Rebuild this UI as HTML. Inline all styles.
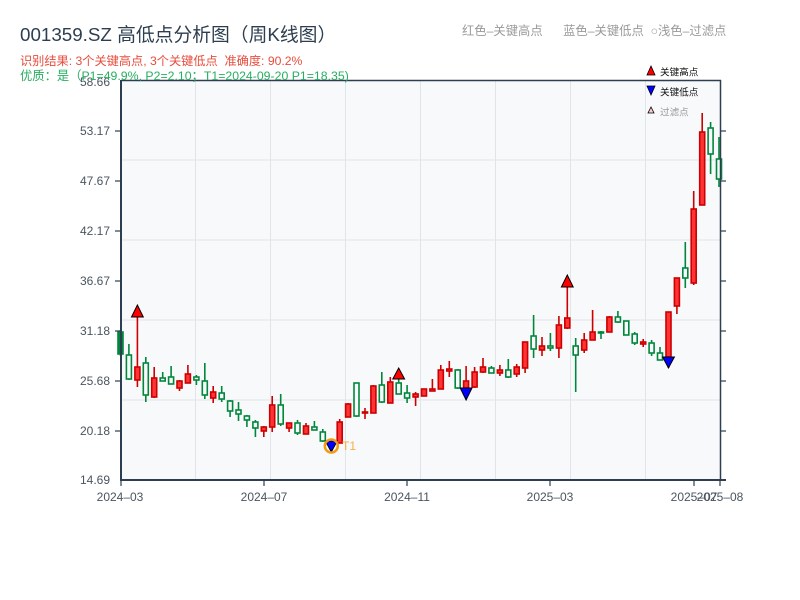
<!DOCTYPE html>
<html><head><meta charset="utf-8"><style>
body{margin:0;background:#fff;width:800px;height:600px;overflow:hidden;font-family:"Liberation Sans","Noto Sans CJK SC",sans-serif}
.t{position:absolute;white-space:nowrap}
</style></head><body>
<div class="t" style="left:20px;top:20px;font-size:18.8px;color:#2c3e50">001359.SZ 高低点分析图（周K线图）</div>
<div class="t" style="left:20px;top:51px;font-size:12.2px;color:#e74c3c">识别结果: 3个关键高点, 3个关键低点&nbsp;&nbsp;准确度: 90.2%</div>
<div class="t" style="left:462px;top:21px;font-size:12.3px;color:#999">红色–关键高点&nbsp;&nbsp;&nbsp;&nbsp;&nbsp;&nbsp;蓝色–关键低点&nbsp;&nbsp;○浅色–过滤点</div>
<svg width="800" height="600" style="position:absolute;left:0;top:0" font-family="Liberation Sans, Noto Sans CJK SC, sans-serif">
<rect x="121" y="81" width="599" height="399" fill="#f7f9fb"/>
<g stroke="#e1e4e8" stroke-width="1">
<line x1="195.5" y1="81" x2="195.5" y2="480"/><line x1="270.5" y1="81" x2="270.5" y2="480"/><line x1="345.5" y1="81" x2="345.5" y2="480"/><line x1="420.5" y1="81" x2="420.5" y2="480"/><line x1="495.5" y1="81" x2="495.5" y2="480"/><line x1="570.5" y1="81" x2="570.5" y2="480"/><line x1="645.5" y1="81" x2="645.5" y2="480"/>
<line x1="121" y1="160" x2="720" y2="160"/><line x1="121" y1="240" x2="720" y2="240"/><line x1="121" y1="320" x2="720" y2="320"/><line x1="121" y1="400" x2="720" y2="400"/>
</g>
<g id="c" stroke-width="1.6">
<g stroke="#00873c" fill="#f7f9fb">
<line x1="120.5" y1="330" x2="120.5" y2="356"/><rect x="118" y="332" width="5" height="22" fill="#00873c"/>
<line x1="128.9" y1="344" x2="128.9" y2="380"/><rect x="126.4" y="355" width="5" height="24"/>
<line x1="145.8" y1="357" x2="145.8" y2="402"/><rect x="143.3" y="363" width="5" height="32"/>
<line x1="162.7" y1="372" x2="162.7" y2="381"/><rect x="160.2" y="378" width="5" height="3"/>
<line x1="171.1" y1="366" x2="171.1" y2="384"/><rect x="168.6" y="377" width="5" height="7"/>
<line x1="196.4" y1="375" x2="196.4" y2="385"/><rect x="193.9" y="377" width="5" height="3"/>
<line x1="204.8" y1="363" x2="204.8" y2="399"/><rect x="202.3" y="381" width="5" height="14"/>
<line x1="221.7" y1="386" x2="221.7" y2="402"/><rect x="219.2" y="393" width="5" height="6"/>
<line x1="230.1" y1="400" x2="230.1" y2="417"/><rect x="227.6" y="401" width="5" height="10"/>
<line x1="238.5" y1="402" x2="238.5" y2="421"/><rect x="236" y="410" width="5" height="4"/>
<line x1="246.9" y1="415" x2="246.9" y2="427"/><rect x="244.4" y="416" width="5" height="4"/>
<line x1="255.4" y1="420" x2="255.4" y2="437"/><rect x="252.9" y="422" width="5" height="6"/>
<line x1="280.7" y1="394" x2="280.7" y2="426"/><rect x="278.2" y="405" width="5" height="19"/>
<line x1="297.5" y1="420" x2="297.5" y2="435"/><rect x="295" y="423" width="5" height="10"/>
<line x1="314.4" y1="421" x2="314.4" y2="430"/><rect x="311.9" y="427" width="5" height="3"/>
<line x1="322.8" y1="429" x2="322.8" y2="442"/><rect x="320.3" y="432" width="5" height="9"/>
<line x1="331.3" y1="440" x2="331.3" y2="452"/><rect x="328.8" y="443" width="5" height="3"/>
<line x1="356.5" y1="383" x2="356.5" y2="417"/><rect x="354" y="383" width="5" height="33"/>
<line x1="381.8" y1="372" x2="381.8" y2="403"/><rect x="379.3" y="385" width="5" height="17"/>
<line x1="398.7" y1="379" x2="398.7" y2="394"/><rect x="396.2" y="383" width="5" height="11"/>
<line x1="407.1" y1="385" x2="407.1" y2="403"/><rect x="404.6" y="393" width="5" height="5"/>
<line x1="457.7" y1="369" x2="457.7" y2="389"/><rect x="455.2" y="370" width="5" height="18"/>
<line x1="491.4" y1="366" x2="491.4" y2="373"/><rect x="488.9" y="368" width="5" height="5"/>
<line x1="508.3" y1="359" x2="508.3" y2="378"/><rect x="505.8" y="370" width="5" height="7"/>
<line x1="533.6" y1="315" x2="533.6" y2="358"/><rect x="531.1" y="336" width="5" height="13"/>
<line x1="550.4" y1="333" x2="550.4" y2="351"/><rect x="547.9" y="346" width="5" height="2"/>
<line x1="575.7" y1="338" x2="575.7" y2="392"/><rect x="573.2" y="346" width="5" height="9"/>
<line x1="601" y1="331" x2="601" y2="339"/><rect x="598.5" y="332" width="5" height="1"/>
<line x1="617.9" y1="311" x2="617.9" y2="323"/><rect x="615.4" y="317" width="5" height="5"/>
<line x1="626.3" y1="321" x2="626.3" y2="335"/><rect x="623.8" y="321" width="5" height="14"/>
<line x1="634.7" y1="332" x2="634.7" y2="345"/><rect x="632.2" y="334" width="5" height="9"/>
<line x1="651.6" y1="340" x2="651.6" y2="356"/><rect x="649.1" y="343" width="5" height="10"/>
<line x1="660" y1="347" x2="660" y2="360"/><rect x="657.5" y="353" width="5" height="7"/>
<line x1="685.3" y1="242" x2="685.3" y2="288"/><rect x="682.8" y="268" width="5" height="10"/>
<line x1="710.6" y1="122" x2="710.6" y2="174"/><rect x="708.1" y="128" width="5" height="26"/>
<line x1="719" y1="137" x2="719" y2="187"/><rect x="716.5" y="159" width="5" height="20"/>
</g>
<g stroke="#cc0000" fill="#ff3333">
<line x1="137.4" y1="315" x2="137.4" y2="387"/><rect x="134.9" y="367" width="5" height="13"/>
<line x1="154.2" y1="367" x2="154.2" y2="398"/><rect x="151.7" y="378" width="5" height="19"/>
<line x1="179.5" y1="380" x2="179.5" y2="391"/><rect x="177" y="381" width="5" height="7"/>
<line x1="187.9" y1="365" x2="187.9" y2="383"/><rect x="185.4" y="374" width="5" height="9"/>
<line x1="213.2" y1="386" x2="213.2" y2="403"/><rect x="210.7" y="392" width="5" height="6"/>
<line x1="263.8" y1="426" x2="263.8" y2="437"/><rect x="261.3" y="427" width="5" height="4"/>
<line x1="272.2" y1="396" x2="272.2" y2="432"/><rect x="269.7" y="405" width="5" height="22"/>
<line x1="289.1" y1="423" x2="289.1" y2="432"/><rect x="286.6" y="423" width="5" height="5"/>
<line x1="306" y1="423" x2="306" y2="434"/><rect x="303.5" y="426" width="5" height="8"/>
<line x1="339.7" y1="419" x2="339.7" y2="443"/><rect x="337.2" y="422" width="5" height="21"/>
<line x1="348.1" y1="403" x2="348.1" y2="417"/><rect x="345.6" y="404" width="5" height="13"/>
<line x1="365" y1="408" x2="365" y2="419"/><rect x="362.5" y="412" width="5" height="1"/>
<line x1="373.4" y1="385" x2="373.4" y2="413"/><rect x="370.9" y="386" width="5" height="27"/>
<line x1="390.3" y1="377" x2="390.3" y2="403"/><rect x="387.8" y="382" width="5" height="21"/>
<line x1="415.6" y1="392" x2="415.6" y2="406"/><rect x="413.1" y="394" width="5" height="3"/>
<line x1="424" y1="389" x2="424" y2="396"/><rect x="421.5" y="389" width="5" height="7"/>
<line x1="432.4" y1="379" x2="432.4" y2="391"/><rect x="429.9" y="389" width="5" height="2"/>
<line x1="440.8" y1="365" x2="440.8" y2="389"/><rect x="438.3" y="370" width="5" height="19"/>
<line x1="449.3" y1="361" x2="449.3" y2="377"/><rect x="446.8" y="369" width="5" height="2"/>
<line x1="466.1" y1="366" x2="466.1" y2="389"/><rect x="463.6" y="381" width="5" height="7"/>
<line x1="474.6" y1="367" x2="474.6" y2="388"/><rect x="472.1" y="372" width="5" height="15"/>
<line x1="483" y1="358" x2="483" y2="373"/><rect x="480.5" y="367" width="5" height="5"/>
<line x1="499.9" y1="365" x2="499.9" y2="376"/><rect x="497.4" y="370" width="5" height="3"/>
<line x1="516.7" y1="364" x2="516.7" y2="377"/><rect x="514.2" y="367" width="5" height="7"/>
<line x1="525.1" y1="342" x2="525.1" y2="373"/><rect x="522.6" y="342" width="5" height="26"/>
<line x1="542" y1="337" x2="542" y2="356"/><rect x="539.5" y="346" width="5" height="4"/>
<line x1="558.9" y1="316" x2="558.9" y2="358"/><rect x="556.4" y="325" width="5" height="23"/>
<line x1="567.3" y1="287" x2="567.3" y2="329"/><rect x="564.8" y="318" width="5" height="10"/>
<line x1="584.2" y1="333" x2="584.2" y2="353"/><rect x="581.7" y="340" width="5" height="10"/>
<line x1="592.6" y1="310" x2="592.6" y2="340"/><rect x="590.1" y="332" width="5" height="8"/>
<line x1="609.4" y1="316" x2="609.4" y2="332"/><rect x="606.9" y="317" width="5" height="15"/>
<line x1="643.2" y1="339" x2="643.2" y2="347"/><rect x="640.7" y="342" width="5" height="2"/>
<line x1="668.5" y1="312" x2="668.5" y2="368"/><rect x="666" y="312" width="5" height="45"/>
<line x1="676.9" y1="278" x2="676.9" y2="314"/><rect x="674.4" y="278" width="5" height="28"/>
<line x1="693.7" y1="191" x2="693.7" y2="285"/><rect x="691.2" y="209" width="5" height="74"/>
<line x1="702.2" y1="113" x2="702.2" y2="205"/><rect x="699.7" y="132" width="5" height="73"/>
</g>
</g>
<g stroke="#000" stroke-width="1">
<polygon points="137.4,305 131.5,317 143.3,317" fill="#ff0000"/>
<polygon points="398.7,368 392.8,379 404.6,379" fill="#ff0000"/>
<polygon points="567.3,275 561.4,287 573.2,287" fill="#ff0000"/>
<polygon points="331.3,452 325.4,441 337.2,441" fill="#0000ff"/>
<polygon points="466.1,400 460.2,388 472,388" fill="#0000ff"/>
<polygon points="668.5,368 662.6,357 674.4,357" fill="#0000ff"/>
</g>
<circle cx="331.3" cy="446" r="6.5" fill="none" stroke="#f39c12" stroke-width="2.5"/>
<text x="342" y="450" font-size="12" fill="#f5b041">T1</text>
<g stroke="#2c3e50">
<line x1="121" y1="80.5" x2="721" y2="80.5" stroke-width="1.5"/>
<line x1="121" y1="80" x2="121" y2="481" stroke-width="2"/>
<line x1="720.5" y1="80" x2="720.5" y2="481" stroke-width="1.5"/>
<line x1="120" y1="480" x2="726" y2="480" stroke-width="2"/>
<g stroke-width="1.2">
<line x1="115" y1="131" x2="120" y2="131"/><line x1="115" y1="181" x2="120" y2="181"/><line x1="115" y1="231" x2="120" y2="231"/><line x1="115" y1="281" x2="120" y2="281"/><line x1="115" y1="331" x2="120" y2="331"/><line x1="115" y1="381" x2="120" y2="381"/><line x1="115" y1="431" x2="120" y2="431"/>
<line x1="721" y1="131" x2="726" y2="131"/><line x1="721" y1="181" x2="726" y2="181"/><line x1="721" y1="231" x2="726" y2="231"/><line x1="721" y1="281" x2="726" y2="281"/><line x1="721" y1="331" x2="726" y2="331"/><line x1="721" y1="381" x2="726" y2="381"/><line x1="721" y1="431" x2="726" y2="431"/>
<line x1="121" y1="481" x2="121" y2="486"/><line x1="264" y1="481" x2="264" y2="486"/><line x1="407" y1="481" x2="407" y2="486"/><line x1="550" y1="481" x2="550" y2="486"/><line x1="694" y1="481" x2="694" y2="486"/><line x1="720" y1="481" x2="720" y2="486"/>
</g></g>
<g font-size="12" fill="#4a5560" text-anchor="end">
<text x="110" y="86">58.66</text><text x="110" y="135">53.17</text><text x="110" y="185">47.67</text><text x="110" y="235">42.17</text><text x="110" y="285">36.67</text><text x="110" y="335">31.18</text><text x="110" y="385">25.68</text><text x="110" y="435">20.18</text><text x="110" y="484">14.69</text>
</g>
<g font-size="12" fill="#4a5560" text-anchor="middle">
<text x="120" y="501">2024–03</text><text x="264" y="501">2024–07</text><text x="407" y="501">2024–11</text><text x="550" y="501">2025–03</text><text x="694" y="501">2025–07</text><text x="720" y="501">2025–08</text>
</g>
<text x="20" y="80" font-size="12.3" fill="#27ae60">优质：是（P1=49.9%, P2=2.10；T1=2024-09-20 P1=18.35)</text>
<g font-size="9.6">
<polygon points="651,66 647,75 655,75" fill="#ff0000" stroke="#000" stroke-width="0.8"/>
<text x="660" y="75.5" fill="#111">关键高点</text>
<polygon points="651,95 647,86 655,86" fill="#0000ff" stroke="#000" stroke-width="0.8"/>
<text x="660" y="95.5" fill="#111">关键低点</text>
<polygon points="651,107 648,113 654,113" fill="#fcc" stroke="#000" stroke-width="0.8"/>
<text x="660" y="115.5" fill="#999">过滤点</text>
</g>
</svg>
</body></html>
